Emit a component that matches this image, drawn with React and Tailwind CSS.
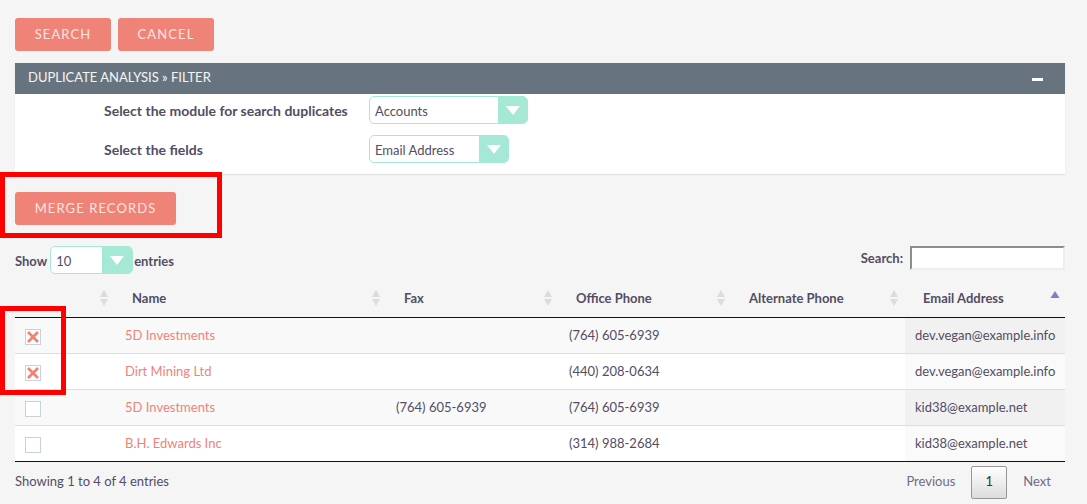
const rows = [
  { checked: true, name: "5D Investments", fax: "", phone: "(764) 605-6939", email: "dev.vegan@example.info" },
  { checked: true, name: "Dirt Mining Ltd", fax: "", phone: "(440) 208-0634", email: "dev.vegan@example.info" },
  { checked: false, name: "5D Investments", fax: "(764) 605-6939", phone: "(764) 605-6939", email: "kid38@example.net" },
  { checked: false, name: "B.H. Edwards Inc", fax: "", phone: "(314) 988-2684", email: "kid38@example.net" },
]

function Btn({ children, className }) {
  return (
    <button className={"h-[33px] rounded-[3px] bg-[#f08377] text-[13px] tracking-[1.1px] text-[#fbe5e2] " + className}>
      {children}
    </button>
  )
}

function Dropdown({ label, width, arrow, height = "h-[28px]" }) {
  return (
    <div className={"flex overflow-hidden rounded-[5px] border border-[#a5e8d6] bg-white " + width + " " + height}>
      <div className="flex-1 pl-[5px] leading-[28px]">{label}</div>
      <div className={"flex items-center justify-center bg-[#a5e8d6] " + arrow}>
        <svg width="16" height="9" viewBox="0 0 16 9">
          <path d="M1 0h14L8 9z" fill="#fff" />
        </svg>
      </div>
    </div>
  )
}

function Sort({ active }) {
  if (active) {
    return (
      <svg className="absolute right-[5px] top-[10px]" width="10" height="8" viewBox="0 0 10 8">
        <path d="M5 0l4.5 7H.5z" fill="#7b7fc9" />
      </svg>
    )
  }
  return (
    <svg className="absolute right-[6px] top-[9px]" width="10" height="16" viewBox="0 0 10 16">
      <path d="M5 0l4 7H1z" fill="#dcdcdc" />
      <path d="M5 16l4-7H1z" fill="#dcdcdc" />
    </svg>
  )
}

function Check({ checked }) {
  return (
    <div className="ml-[10px] mt-[3px] flex h-[16px] w-[16px] items-center justify-center border border-[#c5d2dc] bg-white">
      {checked && (
        <svg width="14" height="14" viewBox="0 0 14 14">
          <path d="M2 2l10 10M12 2L2 12" stroke="#f08377" strokeWidth="2.8" />
        </svg>
      )}
    </div>
  )
}

function App() {
  return (
    <div className="relative h-[504px] w-[1087px] overflow-hidden bg-[#f5f5f5] pl-[15px] pr-[22px] pt-[18px] font-['Lato','Open_Sans',sans-serif] text-[13px] text-[#534d64]">
      <div className="flex gap-[7px]">
        <Btn className="w-[96px]">SEARCH</Btn>
        <Btn className="w-[96px]">CANCEL</Btn>
      </div>

      <div className="mt-[12px] bg-white shadow-[0_1px_1px_rgba(0,0,0,0.08)]">
        <div className="flex h-[31px] items-center justify-between bg-[#677480] pb-[1px] pl-[13px] pr-[22px] text-[#f5f5f5]">
          <span>DUPLICATE ANALYSIS » FILTER</span>
          <div className="mt-[2px] h-[3px] w-[11px] bg-white" />
        </div>
        <div className="flex h-[80px] flex-col gap-[11px] pl-[89px] pt-[2px]">
          <div className="flex items-center">
            <label className="w-[265px] text-[14px] font-bold">Select the module for search duplicates</label>
            <Dropdown label="Accounts" width="w-[159px]" arrow="w-[29px]" />
          </div>
          <div className="flex items-center">
            <label className="w-[265px] text-[14px] font-bold">Select the fields</label>
            <Dropdown label="Email Address" width="w-[140px]" arrow="w-[29px]" />
          </div>
        </div>
      </div>

      <Btn className="mt-[18px] w-[161px]">MERGE RECORDS</Btn>

      <div className="mt-[21px] flex items-start justify-between">
        <div className="flex items-center font-bold">
          <span className="mr-[3px] pt-[4px]">Show</span>
          <div className="font-normal">
            <Dropdown label="10" width="w-[83px]" arrow="w-[30px]" />
          </div>
          <span className="ml-[1px] pt-[4px]">entries</span>
        </div>
        <div className="flex items-center gap-[7px] font-bold">
          <span className="mb-[-1px]">Search:</span>
          <input className="h-[24px] w-[155px] border-2 border-b-[#eeeeee] border-l-[#8c8c8c] border-r-[#eeeeee] border-t-[#8c8c8c] bg-white" />
        </div>
      </div>

      <table className="mt-[7px] w-[1050px] table-fixed border-collapse">
        <colgroup>
          <col className="w-[100px]" />
          <col className="w-[272px]" />
          <col className="w-[172px]" />
          <col className="w-[173px]" />
          <col className="w-[173px]" />
          <col className="w-[160px]" />
        </colgroup>
        <thead>
          <tr className="h-[36px] border-b border-[#111]">
            <th className="relative"><Sort /></th>
            {["Name", "Fax", "Office Phone", "Alternate Phone"].map((h) => (
              <th key={h} className="relative pb-[1px] pl-[17px] text-left font-bold"><Sort />{h}</th>
            ))}
            <th className="relative pb-[1px] pl-[18px] text-left font-bold"><Sort active />Email Address</th>
          </tr>
        </thead>
        <tbody>
          {rows.map((r, i) => (
            <tr key={i} className={"h-[36px] border-b " + (i === 3 ? "border-[#111] " : "border-[#dddddd] ") + (i % 2 === 0 ? "bg-[#f9f9f9]" : "bg-white")}>
              <td><Check checked={r.checked} /></td>
              <td className="pl-[10px] pt-[2px] text-[#f08377]">{r.name}</td>
              <td className="pl-[9px] pt-[2px]">{r.fax}</td>
              <td className="pl-[10px] pt-[2px]">{r.phone}</td>
              <td></td>
              <td className={"pl-[10px] pt-[2px] " + (i % 2 === 0 ? "bg-[#f1f1f1]" : "bg-[#fafafa]")}>{r.email}</td>
            </tr>
          ))}
        </tbody>
      </table>

      <div className="mt-[4px] flex items-center justify-between">
        <span>Showing 1 to 4 of 4 entries</span>
        <div className="flex items-center text-[#6f6b7f]">
          <span className="mr-[16px]">Previous</span>
          <span className="flex h-[33px] w-[36px] items-center justify-center rounded-[2px] border border-[#979797] bg-gradient-to-b from-white to-[#dcdcdc] text-[#333]">1</span>
          <span className="ml-[16px] mr-[14px]">Next</span>
        </div>
      </div>

      {/* red highlight boxes drawn over the page */}
      <div className="absolute left-0 top-[172px] h-[66px] w-[222px] border-[5px] border-[#ff0000]" />
      <div className="absolute left-0 top-[306px] h-[89px] w-[66px] border-[5px] border-[#ff0000]" />
    </div>
  )
}

export default App
